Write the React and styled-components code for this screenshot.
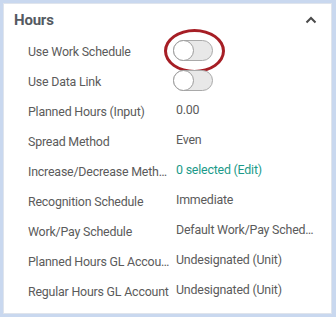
import React from "react";
import styled, { createGlobalStyle } from "styled-components";

const Global = createGlobalStyle`
  html, body {
    margin: 0;
    padding: 0;
    background: #c9d8ef;
  }
  body {
    font-family: Roboto, "Noto Sans", Arial, sans-serif;
  }
`;

const Page = styled.div`
  padding: 3px 4px 3px 3px;
  width: 336px;
  height: 317px;
  box-sizing: border-box;
`;

const Card = styled.section`
  background: #fff;
  border: 1px solid #dfe4ec;
  height: 311px;
  box-sizing: border-box;
  padding: 5px 0 0 0;
`;

const Header = styled.div`
  display: flex;
  align-items: center;
  justify-content: space-between;
  padding: 0 14px 0 10px;
  height: 22px;
`;

const Title = styled.h2`
  margin: 0;
  font-size: 15px;
  font-weight: 700;
  color: #555a62;
  letter-spacing: -0.2px;
`;

const Rows = styled.div`
  display: flex;
  flex-direction: column;
  padding: 5px 0 0 24px;
`;

const Row = styled.div`
  display: grid;
  grid-template-columns: 148px 1fr;
  align-items: center;
  height: 30px;
`;

const Label = styled.div`
  font-size: 12.4px;
  letter-spacing: -0.2px;
  color: #5b5b5b;
  white-space: nowrap;
  overflow: hidden;
  text-overflow: ellipsis;
  padding-right: 6px;
`;

const Value = styled.div`
  font-size: 12.4px;
  letter-spacing: -0.2px;
  color: ${(p) => (p.$link ? "#1b9a89" : "#5b5b5b")};
  white-space: nowrap;
  overflow: hidden;
  text-overflow: ellipsis;
  margin-top: -3px;
  padding-right: 17px;
`;

const ToggleWrap = styled.div`
  position: relative;
  width: 40px;
  height: 21px;
  margin-left: -3px;
  margin-top: -1px;
`;

const Track = styled.div`
  width: 40px;
  height: 21px;
  box-sizing: border-box;
  border: 1px solid #a9a9a9;
  border-radius: 11px;
  background: #e8e8e8;
`;

const Knob = styled.div`
  position: absolute;
  left: 0;
  top: 0;
  width: 21px;
  height: 21px;
  box-sizing: border-box;
  border-radius: 50%;
  border: 1px solid #9c9c9c;
  background: #fff;
`;

const Highlight = styled.div`
  position: absolute;
  left: -9px;
  top: -11px;
  width: 55px;
  height: 38px;
  border: 3px solid #a61e25;
  border-radius: 50%;
`;

function Toggle({ highlighted }) {
  return (
    <ToggleWrap>
      <Track />
      <Knob />
      {highlighted && <Highlight />}
    </ToggleWrap>
  );
}

const Chevron = () => (
  <svg width="12" height="8" viewBox="0 0 12 8">
    <path d="M1.5 6.5 L6 2 L10.5 6.5" fill="none" stroke="#4a4a4a" strokeWidth="2" />
  </svg>
);

const rows = [
  { label: "Use Work Schedule", toggle: true, highlighted: true },
  { label: "Use Data Link", toggle: true },
  { label: "Planned Hours (Input)", value: "0.00" },
  { label: "Spread Method", value: "Even" },
  { label: "Increase/Decrease Method", value: "0 selected (Edit)", link: true },
  { label: "Recognition Schedule", value: "Immediate" },
  { label: "Work/Pay Schedule", value: "Default Work/Pay Schedule" },
  { label: "Planned Hours GL Account", value: "Undesignated (Unit)" },
  { label: "Regular Hours GL Account", value: "Undesignated (Unit)" },
];

export default function App() {
  return (
    <Page>
      <Global />
      <Card>
        <Header>
          <Title>Hours</Title>
          <Chevron />
        </Header>
        <Rows>
          {rows.map((r) => (
            <Row key={r.label}>
              <Label>{r.label}</Label>
              {r.toggle ? (
                <Toggle highlighted={r.highlighted} />
              ) : (
                <Value $link={r.link}>{r.value}</Value>
              )}
            </Row>
          ))}
        </Rows>
      </Card>
    </Page>
  );
}
